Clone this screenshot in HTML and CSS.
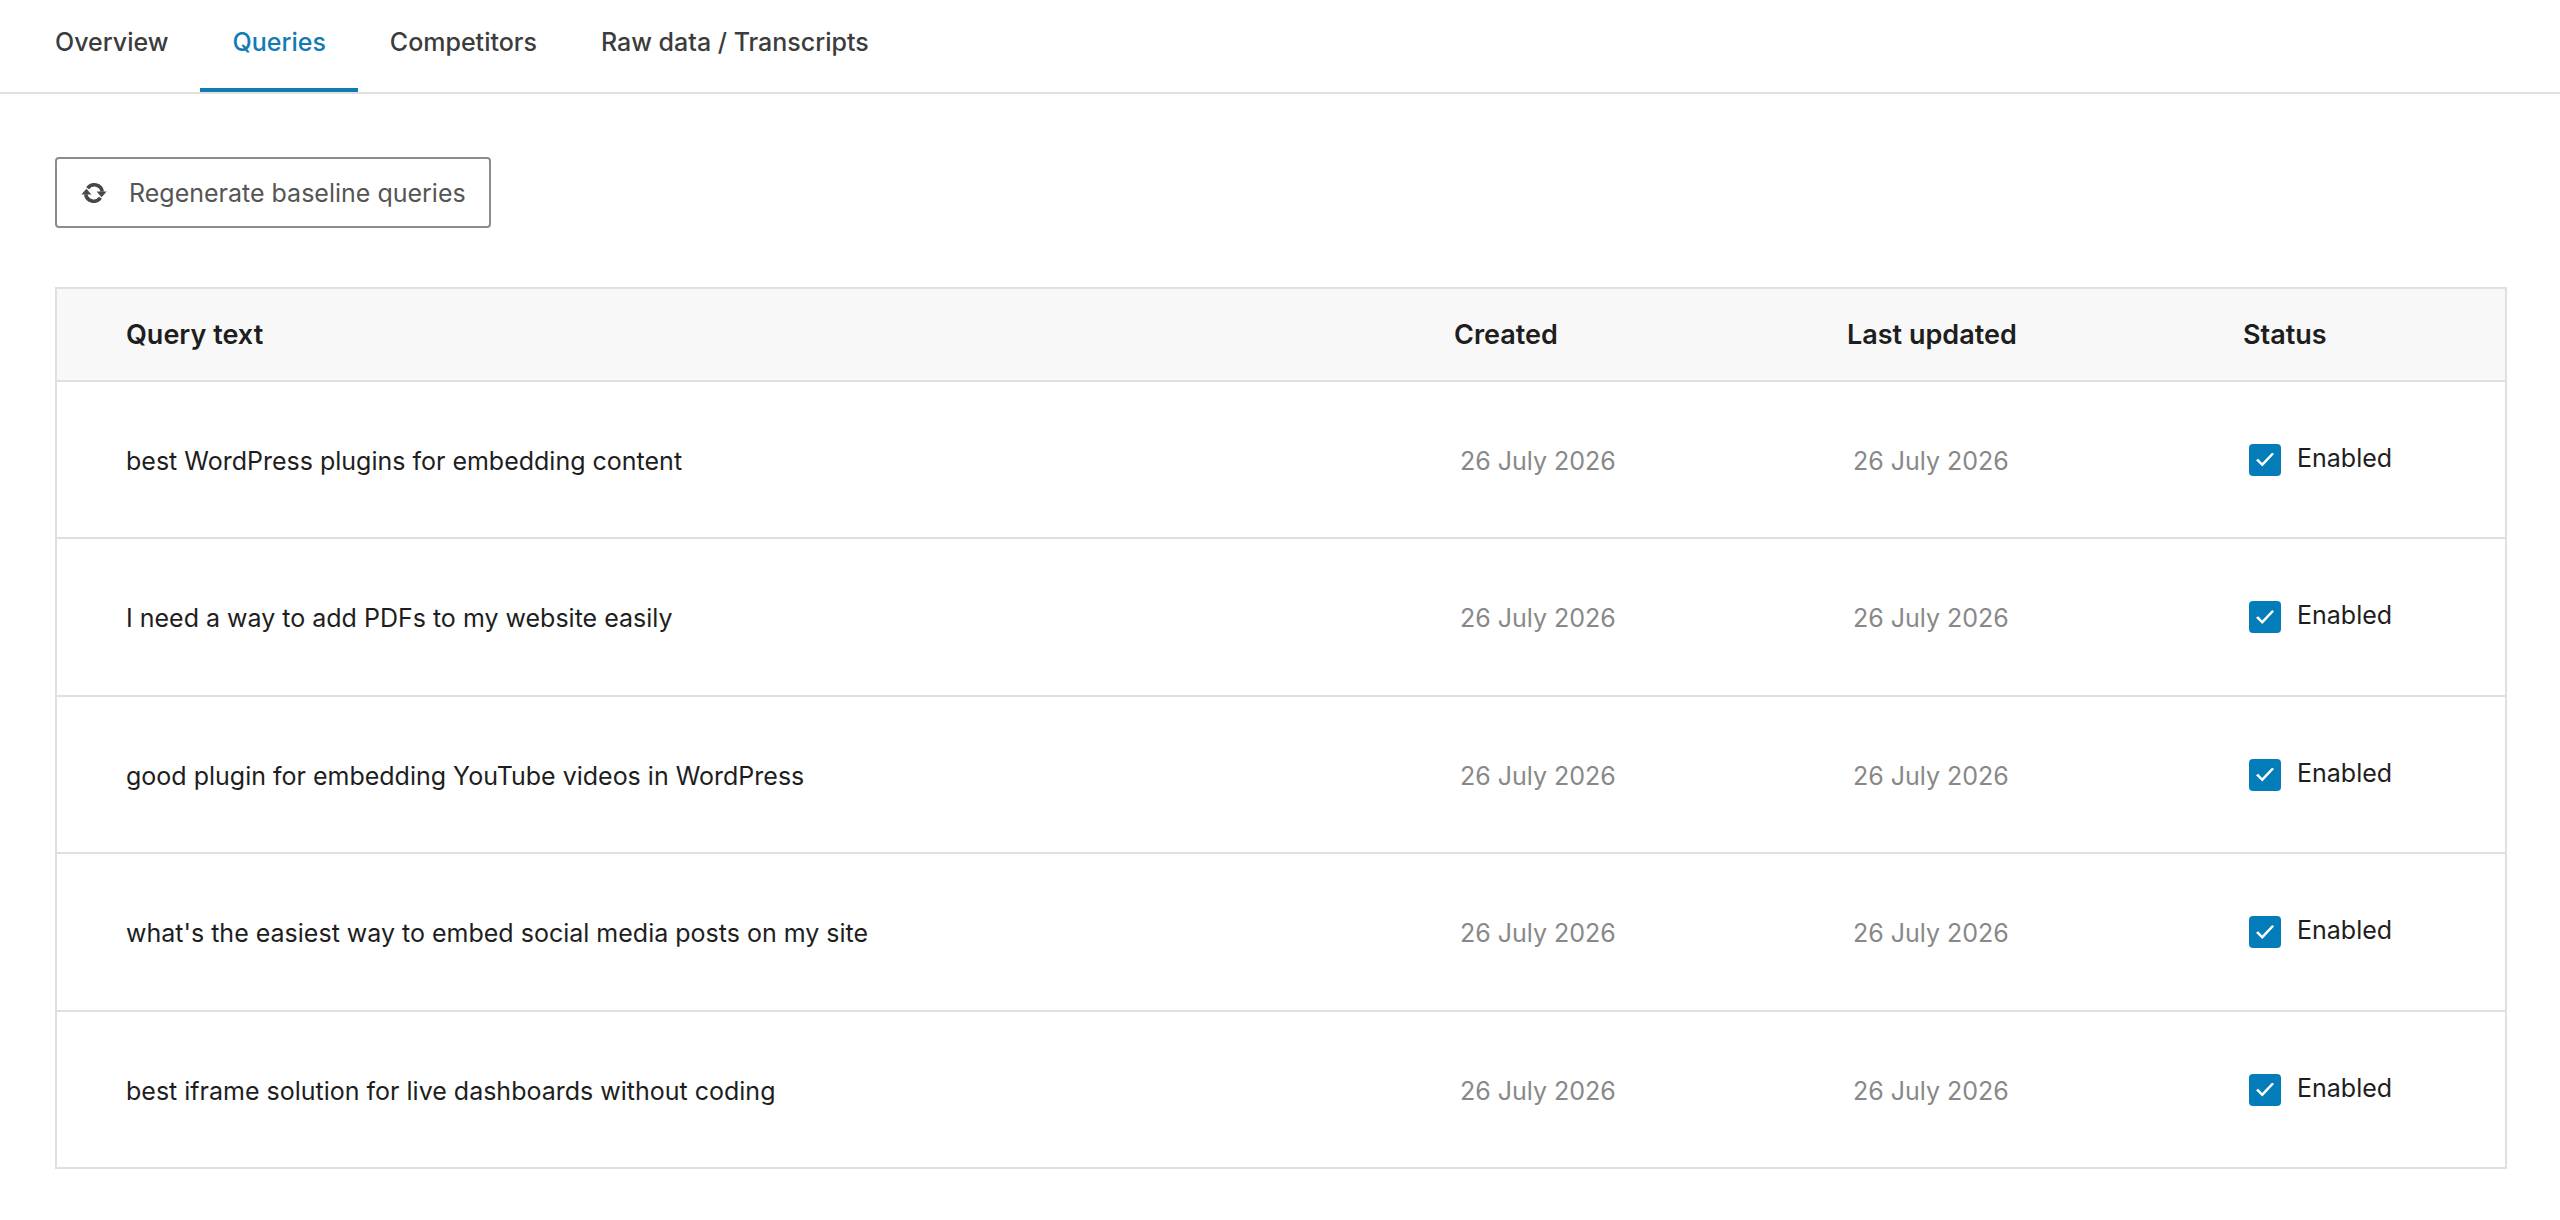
FILE: index.html
```html
<!DOCTYPE html>
<html lang="en">
<head>
<meta charset="utf-8">
<meta name="viewport" content="width=device-width, initial-scale=1">
<title>Queries</title>
<link rel="stylesheet" href="styles.css">
</head>
<body>
<nav class="tabs" aria-label="Sections">
  <a class="tab" href="#overview">Overview</a>
  <a class="tab tab-active" href="#queries" aria-current="page">Queries</a>
  <a class="tab" href="#competitors">Competitors</a>
  <a class="tab" href="#raw">Raw data / Transcripts</a>
</nav>
<main class="content">
  <button class="button" type="button">
    <svg class="button-icon" viewBox="0 0 26 20" aria-hidden="true">
      <path d="M6.6 5.2A8.2 8.2 0 0 1 21.3 8.6" fill="none" stroke="currentColor" stroke-width="3.6"/>
      <path d="M19.4 14.8A8.2 8.2 0 0 1 4.7 11.4" fill="none" stroke="currentColor" stroke-width="3.6"/>
      <path d="M15.6 8.6H25.6L20.6 14.2Z" fill="currentColor"/>
      <path d="M10.4 11.4H.4L5.4 5.8Z" fill="currentColor"/>
    </svg>
    Regenerate baseline queries
  </button>
  <table class="queries">
    <colgroup><col><col class="col-created"><col class="col-updated"><col class="col-status"></colgroup>
    <thead>
      <tr><th scope="col">Query text</th><th scope="col">Created</th><th scope="col">Last updated</th><th scope="col">Status</th></tr>
    </thead>
    <tbody>
      <tr><td class="query">best WordPress plugins for embedding content</td><td class="date">26 July 2026</td><td class="date">26 July 2026</td><td><label class="status"><input class="checkbox" type="checkbox" checked><span class="status-text">Enabled</span></label></td></tr>
      <tr><td class="query">I need a way to add PDFs to my website easily</td><td class="date">26 July 2026</td><td class="date">26 July 2026</td><td><label class="status"><input class="checkbox" type="checkbox" checked><span class="status-text">Enabled</span></label></td></tr>
      <tr><td class="query">good plugin for embedding YouTube videos in WordPress</td><td class="date">26 July 2026</td><td class="date">26 July 2026</td><td><label class="status"><input class="checkbox" type="checkbox" checked><span class="status-text">Enabled</span></label></td></tr>
      <tr><td class="query">what's the easiest way to embed social media posts on my site</td><td class="date">26 July 2026</td><td class="date">26 July 2026</td><td><label class="status"><input class="checkbox" type="checkbox" checked><span class="status-text">Enabled</span></label></td></tr>
      <tr><td class="query">best iframe solution for live dashboards without coding</td><td class="date">26 July 2026</td><td class="date">26 July 2026</td><td><label class="status"><input class="checkbox" type="checkbox" checked><span class="status-text">Enabled</span></label></td></tr>
    </tbody>
  </table>
</main>
</body>
</html>
```
FILE: styles.css
```css
* {
  box-sizing: border-box;
}

body {
  margin: 0;
  background: #fff;
  color: #1e1e1e;
  font: 400 25px/32px Inter, "Liberation Sans", sans-serif;
}

.tabs {
  display: flex;
  padding: 0 23px;
  border-bottom: 2px solid #e0e0e0;
}

.tab {
  padding: 26px 32px 30px;
  border-bottom: 4px solid transparent;
  color: #3c3c3c;
  font-weight: 500;
  text-decoration: none;
}

.tab-active {
  border-color: #117cb3;
  color: #117cb3;
}

.content {
  padding: 63px 53px 50px 55px;
}

.button {
  display: flex;
  align-items: center;
  gap: 22px;
  margin: 0 0 59px;
  padding: 18px 23px 17px 24px;
  border: 2px solid #8c8c8c;
  border-radius: 4px;
  background: #fff;
  color: #555;
  font: inherit;
}

.button-icon {
  width: 26px;
  height: 20px;
  color: #484848;
}

.queries {
  width: 100%;
  table-layout: fixed;
  border: 2px solid #e0e0e0;
  border-spacing: 0;
}

.col-created {
  width: 393px;
}

.col-updated {
  width: 396px;
}

.col-status {
  width: 262px;
}

th {
  padding: 30px 0 29px;
  background: #f8f8f8;
  font-size: 27px;
  font-weight: 600;
  text-align: left;
}

th:first-child,
td:first-child {
  padding-left: 69px;
}

td {
  height: 157px;
  padding: 0 0 0 6px;
  border-top: 2px solid #e0e0e0;
}

tr:nth-child(even) td {
  height: 158px;
}

.query,
.date {
  padding-top: 2px;
}

.date {
  color: #888;
}

.status {
  display: flex;
  align-items: center;
  gap: 16px;
}

.status-text {
  padding-bottom: 4px;
}

.checkbox {
  display: grid;
  place-content: center;
  width: 32px;
  height: 32px;
  margin: 0;
  border-radius: 4px;
  background: #fff;
  appearance: none;
}

.checkbox:checked {
  background: #047cb9;
}

.checkbox:checked::before {
  width: 18px;
  height: 14px;
  background: #fff;
  clip-path: polygon(0 55%, 12% 44%, 34% 75%, 90% 0, 100% 10%, 35% 100%);
  content: "";
}
```
